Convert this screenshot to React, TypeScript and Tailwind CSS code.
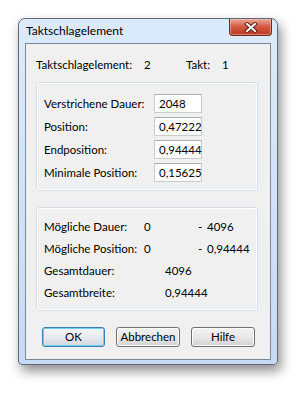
import type { ReactNode } from "react";

const FONT = { fontFamily: '"Segoe UI", Lato, "Noto Sans", Arial, sans-serif' };

function Eingabe({ wert }: { wert: string }) {
  return (
    <div className="flex h-[19px] w-[48px] shrink-0 items-center border border-[#c9cdd2] border-t-[#abadb3] bg-white pl-[4px] text-[11.5px] leading-none text-black">
      {wert}
    </div>
  );
}

function Knopf({ children, standard }: { children: ReactNode; standard?: boolean }) {
  return (
    <div
      className={
        standard
          ? "flex h-[20px] w-[63px] items-center justify-center rounded-[3px] border border-[#3c7fb1] bg-gradient-to-b from-[#f4f6f8] via-[#e8ebee] to-[#d3d6da] text-[11.5px] text-black shadow-[inset_0_0_0_1px_#6fd0f7]"
          : "flex h-[20px] w-[64px] items-center justify-center rounded-[3px] border border-[#707070] bg-gradient-to-b from-[#f2f2f2] via-[#e8e8e8] to-[#d2d2d2] text-[11.5px] text-black shadow-[inset_0_0_0_1px_#fcfcfc]"
      }
    >
      {children}
    </div>
  );
}

function Gruppe({ children, className }: { children: ReactNode; className: string }) {
  return (
    <div className={`rounded-[3px] border border-[#d5dfe5] shadow-[inset_0_0_0_1px_#ffffff] ${className}`}>
      {children}
    </div>
  );
}

export default function App() {
  const eingaben = [
    ["Verstrichene Dauer:", "2048"],
    ["Position:", "0,47222"],
    ["Endposition:", "0,94444"],
    ["Minimale Position:", "0,15625"],
  ];

  return (
    <div className="h-[393px] w-[301px] whitespace-nowrap bg-white pl-[18px] pt-[18px]" style={FONT}>
      <div className="flex h-[347px] w-[260px] flex-col rounded-t-[7px] rounded-b-[4px] border border-[#5f6b78] bg-gradient-to-b from-[#dcebfb] to-[#c6dbf3] shadow-[3px_6px_12px_rgba(0,0,0,0.45)]">
        {/* Titelleiste */}
        <div className="flex h-[24px] items-start justify-between">
          <span className="pl-[7px] pt-[5px] text-[12px] leading-[14px] text-black">Taktschlagelement</span>
          <div className="mr-[5px] flex h-[17px] w-[43px] items-center justify-center rounded-b-[4px] border border-t-0 border-[#6b2a1c] bg-gradient-to-b from-[#e9a899] via-[#d2553e] to-[#bb3a1f] shadow-[inset_0_0_0_1px_rgba(255,200,180,0.5)]">
            <svg width="14" height="11" viewBox="0 0 14 11">
              <path d="M3 2 L11 9 M11 2 L3 9" stroke="#5a2216" strokeWidth="4" strokeLinecap="square" />
              <path d="M3 2 L11 9 M11 2 L3 9" stroke="#ffffff" strokeWidth="2" strokeLinecap="square" />
            </svg>
          </div>
        </div>

        {/* Clientbereich */}
        <div className="mx-[6px] mb-[4px] flex flex-1 flex-col border border-[#7c8894] bg-[#f0f0f0] pl-[10px] pr-[12px] text-[11.5px] text-black">
          <div className="mt-[13px] flex h-[16px] items-center">
            <span className="w-[108px] shrink-0">Taktschlagelement:</span>
            <span className="w-[42px] shrink-0">2</span>
            <span className="w-[36px] shrink-0">Takt:</span>
            <span>1</span>
          </div>

          <Gruppe className="mt-[9px] flex flex-col gap-[4px] pb-[8px] pl-[7px] pt-[11px]">
            {eingaben.map(([label, wert]) => (
              <div key={label} className="flex h-[19px] items-center">
                <span className="w-[110px] shrink-0">{label}</span>
                <Eingabe wert={wert} />
              </div>
            ))}
          </Gruppe>

          <Gruppe className="mt-[16px] flex flex-col pb-[6px] pl-[7px] pt-[8px]">
            <div className="flex h-[22px] items-center">
              <span className="w-[100px] shrink-0">Mögliche Dauer:</span>
              <span className="w-[54px] shrink-0">0</span>
              <span className="w-[9px] shrink-0">-</span>
              <span>4096</span>
            </div>
            <div className="flex h-[22px] items-center">
              <span className="w-[100px] shrink-0">Mögliche Position:</span>
              <span className="w-[54px] shrink-0">0</span>
              <span className="w-[9px] shrink-0">-</span>
              <span>0,94444</span>
            </div>
            <div className="flex h-[22px] items-center">
              <span className="w-[121px] shrink-0">Gesamtdauer:</span>
              <span>4096</span>
            </div>
            <div className="flex h-[22px] items-center">
              <span className="w-[121px] shrink-0">Gesamtbreite:</span>
              <span>0,94444</span>
            </div>
          </Gruppe>

          <div className="mt-[16px] flex gap-[11px] pl-[6px]">
            <Knopf standard>OK</Knopf>
            <Knopf>Abbrechen</Knopf>
            <Knopf>Hilfe</Knopf>
          </div>
        </div>
      </div>
    </div>
  );
}
